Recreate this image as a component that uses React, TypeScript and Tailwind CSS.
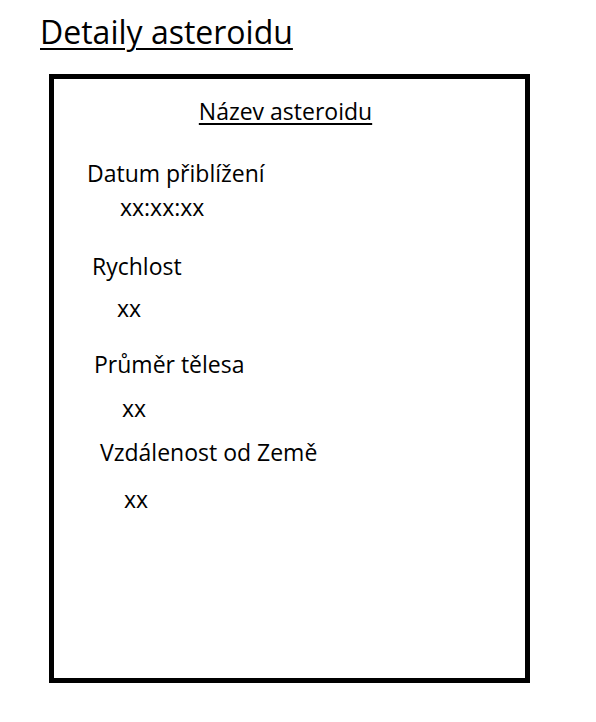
export default function App() {
  return (
    <div className="w-[596px] h-[722px] bg-white text-black font-['Open_Sans',sans-serif] overflow-hidden">
      {/* Page heading */}
      <h1 className="ml-[40px] pt-[16px] text-[32px] leading-none underline decoration-2 underline-offset-[4px]">
        Detaily asteroidu
      </h1>

      {/* Detail card */}
      <div className="ml-[49px] mt-[26px] w-[481px] h-[609px] border-[5px] border-black flex flex-col">
        <h2 className="mt-[21px] text-center pr-[8px] text-[23px] leading-none underline underline-offset-[3px]">
          Název asteroidu
        </h2>

        <p className="ml-[33px] mt-[39px] text-[23px] leading-none">Datum přiblížení</p>
        <p className="ml-[66px] mt-[11px] text-[23px] leading-none">xx:xx:xx</p>

        <p className="ml-[38px] mt-[36px] text-[23px] leading-none">Rychlost</p>
        <p className="ml-[63px] mt-[19px] text-[23px] leading-none">xx</p>

        <p className="ml-[40px] mt-[33px] text-[23px] leading-none">Průměr tělesa</p>
        <p className="ml-[68px] mt-[21px] text-[23px] leading-none">xx</p>

        <p className="ml-[46px] mt-[21px] text-[23px] leading-none">Vzdálenost od Země</p>
        <p className="ml-[70px] mt-[24px] text-[23px] leading-none">xx</p>
      </div>
    </div>
  )
}
